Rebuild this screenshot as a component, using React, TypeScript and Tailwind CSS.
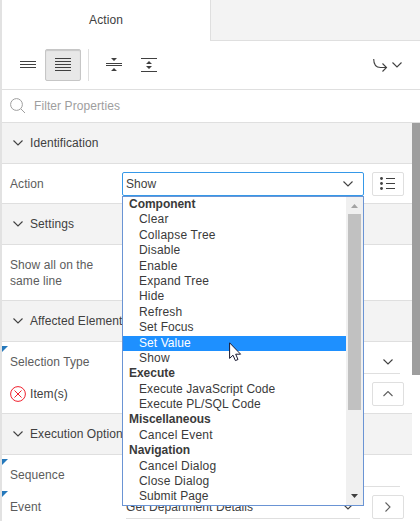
import type { ReactNode } from "react";

type Dir = "down" | "up" | "right";

const chevrons: Record<Dir, string> = {
  down: "M0.5 0.5 L5 5 L9.5 0.5",
  up: "M0.5 5 L5 0.5 L9.5 5",
  right: "M0.5 0.5 L5 5 L0.5 9.5",
};

function Chevron({ dir = "down" }: { dir?: Dir }) {
  const right = dir === "right";
  return (
    <svg
      width={right ? 6 : 10}
      height={right ? 10 : 6}
      fill="none"
      stroke={dir === "down" ? "#404040" : "#606060"}
      strokeWidth="1.1"
      className="shrink-0"
    >
      <path d={chevrons[dir]} />
    </svg>
  );
}

function SectionHeader({ title }: { title: string }) {
  return (
    <div className="flex h-[41px] shrink-0 items-center border-b border-[#dfdfdf] bg-[#f3f3f3] pl-[11px] text-[#404040]">
      <Chevron />
      <span className="ml-[7px] whitespace-nowrap">{title}</span>
    </div>
  );
}

function SquareButton({ children }: { children: ReactNode }) {
  return (
    <button className="flex h-6 w-8 shrink-0 items-center justify-center rounded-[2px] border border-[#dfdfdf] bg-white">
      {children}
    </button>
  );
}

function ChangedMark() {
  return (
    <svg width="6" height="6" className="absolute top-0 left-0">
      <path d="M0 0H6L0 6Z" fill="#2578bb" />
    </svg>
  );
}

const options: { label: string; group?: boolean; tight?: boolean }[] = [
  { label: "Component", group: true },
  { label: "Clear" },
  { label: "Collapse Tree" },
  { label: "Disable" },
  { label: "Enable" },
  { label: "Expand Tree" },
  { label: "Hide" },
  { label: "Refresh" },
  { label: "Set Focus", tight: true },
  { label: "Set Value", tight: true },
  { label: "Show" },
  { label: "Execute", group: true },
  { label: "Execute JavaScript Code", tight: true },
  { label: "Execute PL/SQL Code", tight: true },
  { label: "Miscellaneous", group: true },
  { label: "Cancel Event" },
  { label: "Navigation", group: true },
  { label: "Cancel Dialog" },
  { label: "Close Dialog" },
  { label: "Submit Page", tight: true },
];

function OptionList() {
  return (
    <div className="absolute top-[23px] -left-px z-10 flex h-[310px] w-[242px] border border-[#6a94d4] bg-white text-[#3a3a3a]">
      <ul className="flex-1">
        {options.map((o) => (
          <li
            key={o.label}
            className={
              "h-[15.4px] leading-[15.4px] whitespace-nowrap " +
              (o.group ? "pl-[6px] font-bold tracking-[-0.03px]" : "pl-[16px]") +
              (o.group ? "" : o.tight ? " tracking-[0.07px]" : " tracking-[0.2px]") +
              (o.label === "Set Value" ? " bg-[#1e90ff] text-white" : "")
            }
          >
            {o.label}
          </li>
        ))}
      </ul>
      <div className="flex w-[17px] flex-col items-center bg-[#f0f0f0]">
        <svg width="17" height="17" className="shrink-0">
          <path d="M5 11L8.5 7L12 11Z" fill="#a3a3a3" />
        </svg>
        <div className="h-[196px] w-[13px] bg-[#c1c1c1]" />
        <svg width="17" height="17" className="mt-auto shrink-0">
          <path d="M5 6L8.5 10L12 6Z" fill="#404040" />
        </svg>
      </div>
    </div>
  );
}

function Pointer() {
  return (
    <svg width="13" height="20" className="absolute top-[342px] left-[227px] z-20">
      <path
        d="M0.6 0.8V16.4L4 13.2L6.4 18.6L9 17.5L6.7 12.2H11.6Z"
        fill="#fff"
        stroke="#181830"
        strokeWidth="1"
      />
    </svg>
  );
}

export default function App() {
  return (
    <div className="relative flex h-[521px] w-[420px] flex-col overflow-hidden border-l-2 border-[#e2e2e2] bg-white font-['Liberation_Sans',Arial,sans-serif] text-[12px] leading-[16px] tracking-[0.08px] text-[#5c5c5c]">
      <div className="flex h-[41px] shrink-0">
        <div className="flex w-[208px] items-center justify-center pb-[2px] text-[#404040]">Action</div>
        <div className="flex-1 border-b border-l border-[#dfdfdf] bg-[#f3f3f3]" />
      </div>

      <div className="flex h-[49px] shrink-0 items-center border-b border-[#dfdfdf]">
        <svg width="16" height="8" className="ml-[18px]" fill="#404040">
          <path d="M0 0h16v1H0zM0 3h16v1H0zM0 6h16v1H0z" />
        </svg>
        <div className="ml-[9px] flex h-8 w-9 items-center justify-center rounded-[2px] border border-[#c6c6c6] bg-[#e8e8e8] shadow-[inset_0_1px_1px_#c8c8c8]">
          <svg width="16" height="14" fill="#404040">
            <path d="M0 0h16v1H0zM0 3h16v1H0zM0 6h16v1H0zM0 9h16v1H0zM0 12h16v1H0z" />
          </svg>
        </div>
        <div className="ml-[7px] h-8 w-px bg-[#dfdfdf]" />
        <svg width="16" height="14" className="ml-[17px]" fill="#404040">
          <path d="M0 5h16v1H0zM0 7h16v1H0zM5 0H11L8 3ZM5 13H11L8 10Z" />
        </svg>
        <svg width="16" height="14" className="ml-[19px]" fill="#404040">
          <path d="M0 0h16v1H0zM0 13h16v1H0zM5 6H11L8 3ZM5 8H11L8 11Z" />
        </svg>
        <svg width="15" height="14" className="ml-auto" fill="none" stroke="#404040" strokeWidth="1.1">
          <path d="M0.7 1C0.7 6 3 9.5 7.5 9.5H13.5M9.5 5.5L13.5 9.5L9.5 13.5" />
        </svg>
        <div className="mr-[18px] ml-[4px]">
          <Chevron />
        </div>
      </div>

      <div className="flex h-[33px] shrink-0 items-center border-b border-[#dfdfdf] pl-[8px] text-[#9e9e9e]">
        <svg width="16" height="16" fill="none" stroke="#9e9e9e" strokeWidth="1">
          <circle cx="6.5" cy="6.5" r="5.9" />
          <path d="M11 11L15 15" />
        </svg>
        <span className="ml-[8px]">Filter Properties</span>
      </div>

      <div className="flex min-h-0 flex-1">
        <div className="flex w-[410px] shrink-0 flex-col">
          <SectionHeader title="Identification" />
          <div className="flex h-10 shrink-0 items-center border-b border-[#dfdfdf] pl-[8px]">
            <span className="w-[112px]">Action</span>
            <div className="relative mt-px flex h-6 w-[242px] items-center justify-between rounded-[2px] border border-[#3598e8] pr-[10px] pl-[3px] text-[#404040]">
              Show
              <Chevron />
              <OptionList />
            </div>
            <div className="mt-px ml-[8px]">
              <SquareButton>
                <svg width="16" height="14" fill="#404040">
                  <path d="M6 1h9v1H6zM6 6h9v1H6zM6 11h9v1H6z" />
                  <circle cx="1.5" cy="1.5" r="1.4" />
                  <circle cx="1.5" cy="6.5" r="1.4" />
                  <circle cx="1.5" cy="11.5" r="1.4" />
                </svg>
              </SquareButton>
            </div>
          </div>

          <SectionHeader title="Settings" />
          <div className="h-14 shrink-0 border-b border-[#dfdfdf] pt-[12px] pl-[8px]">
            <p className="w-[100px]">Show all on the same line</p>
          </div>

          <SectionHeader title="Affected Elements" />
          <div className="relative flex h-8 shrink-0 pl-[8px]">
            <div className="absolute top-[4px] left-0"><ChangedMark /></div>
            <span className="w-[116px] pt-[12px]">Selection Type</span>
            <div className="flex w-[274px] items-center justify-end border-b border-[#dfdfdf] pt-[8px] pr-[7px]">
              <Chevron />
            </div>
          </div>
          <div className="flex h-10 shrink-0 items-center border-b border-[#dfdfdf] pl-[8px] text-[#404040]">
            <svg width="16" height="16" fill="none" stroke="#f0202d" strokeWidth="1">
              <circle cx="8" cy="8" r="7.4" />
              <path d="M4.5 4.5L11.5 11.5M11.5 4.5L4.5 11.5" />
            </svg>
            <span className="ml-[4px]">Item(s)</span>
            <div className="mr-[8px] ml-auto">
              <SquareButton><Chevron dir="up" /></SquareButton>
            </div>
          </div>

          <SectionHeader title="Execution Options" />
          <div className="relative flex h-8 shrink-0 pl-[8px]">
            <div className="absolute top-[4px] left-0"><ChangedMark /></div>
            <span className="w-[116px] pt-[12px]">Sequence</span>
            <div className="w-[274px] border-b border-[#dfdfdf]" />
          </div>
          <div className="relative flex h-8 shrink-0 pl-[8px]">
            <div className="absolute top-[4px] left-0"><ChangedMark /></div>
            <span className="w-[116px] pt-[12px]">Event</span>
            <div className="flex w-[234px] items-center justify-between border-b border-[#dfdfdf] pt-[8px] pr-[7px] text-[#404040]">
              Get Department Details
              <Chevron />
            </div>
            <div className="mt-[8px] ml-[12px]">
              <SquareButton><Chevron dir="right" /></SquareButton>
            </div>
          </div>
        </div>
        <div className="h-[252px] w-2 shrink-0 bg-[#9e9e9e]" />
      </div>
      <Pointer />
    </div>
  );
}
